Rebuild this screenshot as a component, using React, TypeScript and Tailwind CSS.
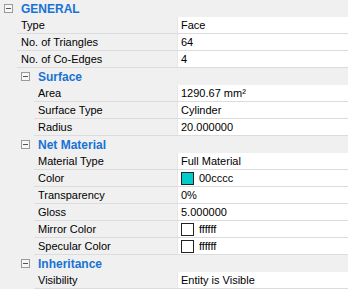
// Property grid — three-level collapsible sections, Windows-style.
type Item = { label: string; value: string; swatch?: string };
type Section = { title: string; level: 1 | 2; items: Item[] };

const SECTIONS: Section[] = [
  {
    title: "GENERAL",
    level: 1,
    items: [
      { label: "Type", value: "Face" },
      { label: "No. of Triangles", value: "64" },
      { label: "No. of Co-Edges", value: "4" },
    ],
  },
  {
    title: "Surface",
    level: 2,
    items: [
      { label: "Area", value: "1290.67 mm²" },
      { label: "Surface Type", value: "Cylinder" },
      { label: "Radius", value: "20.000000" },
    ],
  },
  {
    title: "Net Material",
    level: 2,
    items: [
      { label: "Material Type", value: "Full Material" },
      { label: "Color", value: "00cccc", swatch: "#00cccc" },
      { label: "Transparency", value: "0%" },
      { label: "Gloss", value: "5.000000" },
      { label: "Mirror Color", value: "ffffff", swatch: "#ffffff" },
      { label: "Specular Color", value: "ffffff", swatch: "#ffffff" },
    ],
  },
  {
    title: "Inheritance",
    level: 2,
    items: [{ label: "Visibility", value: "Entity is Visible" }],
  },
];

function MinusBox() {
  return (
    <span className="flex h-[9px] w-[9px] items-center justify-center border border-[#9a9a9a] bg-[#f7f7f7]">
      <span className="h-px w-[5px] bg-[#555]" />
    </span>
  );
}

function Header({ title, level }: { title: string; level: 1 | 2 }) {
  return (
    <div className="flex h-[17px] items-center">
      <div className={`flex h-full items-center ${level === 1 ? "w-[21px] pl-1" : "w-[38px] pl-[21px]"}`}>
        <MinusBox />
      </div>
      <span className="text-[12px] font-bold text-[#1872d4]">{title}</span>
    </div>
  );
}

function Row({ item, level }: { item: Item; level: 1 | 2 }) {
  return (
    <div className="flex h-[17px]">
      <div className={level === 1 ? "w-[17px] shrink-0" : "w-[34px] shrink-0"} />
      <div className="flex flex-1 border-b border-[#dcdcdc]">
        <div className={`flex items-center pl-1 ${level === 1 ? "w-[160px]" : "w-[143px]"}`}>{item.label}</div>
        <div className="flex flex-1 items-center gap-[5px] border-l border-[#e6e6e6] bg-white pl-[3px]">
          {item.swatch && (
            <span className="h-[13px] w-[13px] border border-[#222]" style={{ background: item.swatch }} />
          )}
          <span>{item.value}</span>
        </div>
      </div>
    </div>
  );
}

export default function App() {
  return (
    <div
      className="h-[289px] w-[348px] overflow-hidden bg-[#f0f0f0] text-[11px] text-black"
      style={{ fontFamily: '"Liberation Sans", Arial, sans-serif' }}
    >
      {SECTIONS.map((s) => (
        <div key={s.title}>
          <Header title={s.title} level={s.level} />
          {s.items.map((it) => (
            <Row key={it.label} item={it} level={s.level} />
          ))}
        </div>
      ))}
    </div>
  );
}
